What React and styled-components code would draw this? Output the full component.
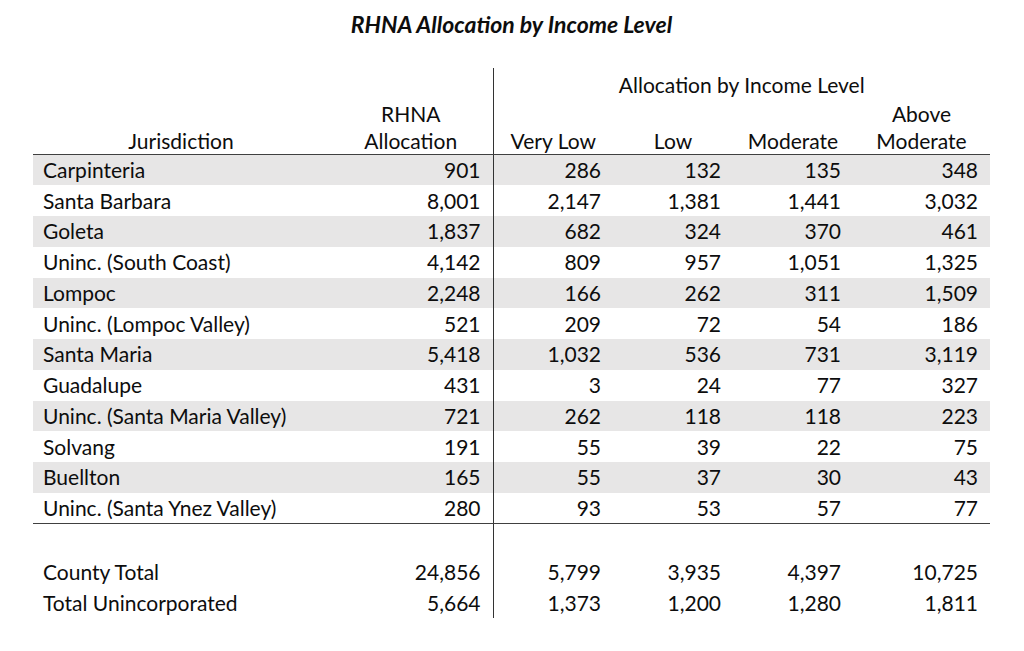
import styled, { createGlobalStyle } from "styled-components";

const rows = [
    ["Carpinteria", "901", "286", "132", "135", "348"],
    ["Santa Barbara", "8,001", "2,147", "1,381", "1,441", "3,032"],
    ["Goleta", "1,837", "682", "324", "370", "461"],
    ["Uninc. (South Coast)", "4,142", "809", "957", "1,051", "1,325"],
    ["Lompoc", "2,248", "166", "262", "311", "1,509"],
    ["Uninc. (Lompoc Valley)", "521", "209", "72", "54", "186"],
    ["Santa Maria", "5,418", "1,032", "536", "731", "3,119"],
    ["Guadalupe", "431", "3", "24", "77", "327"],
    ["Uninc. (Santa Maria Valley)", "721", "262", "118", "118", "223"],
    ["Solvang", "191", "55", "39", "22", "75"],
    ["Buellton", "165", "55", "37", "30", "43"],
    ["Uninc. (Santa Ynez Valley)", "280", "93", "53", "57", "77"],
];

const totals = [
    ["County Total", "24,856", "5,799", "3,935", "4,397", "10,725"],
    ["Total Unincorporated", "5,664", "1,373", "1,200", "1,280", "1,811"],
];

const widths = [296, 164, 120, 120, 120, 137];

const App = () => {
    return (
        <>
            <GlobalStyle />
            <PageStyles>
                <TitleStyles>RHNA Allocation by Income Level</TitleStyles>
                <TableStyles>
                    <colgroup>
                        {widths.map((w, i) => <col key={i} style={{ width: w }} />)}
                    </colgroup>
                    <thead>
                        <tr className="top">
                            <th />
                            <th />
                            <th colSpan={4} className="divider">Allocation by Income Level</th>
                        </tr>
                        <tr className="labels">
                            <th>Jurisdiction</th>
                            <th>RHNA<br />Allocation</th>
                            <th className="divider">Very Low</th>
                            <th>Low</th>
                            <th>Moderate</th>
                            <th>Above<br />Moderate</th>
                        </tr>
                    </thead>
                    <tbody>
                        {rows.map((r, i) => (
                            <RowStyles key={r[0]} $shaded={i % 2 === 0} $last={i === rows.length - 1}>
                                {r.map((c, j) => (
                                    <td key={j} className={j === 2 ? "divider" : ""}>{c}</td>
                                ))}
                            </RowStyles>
                        ))}
                        <RowStyles $height={33}>
                            <td /><td /><td className="divider" /><td /><td /><td />
                        </RowStyles>
                        {totals.map((r) => (
                            <RowStyles key={r[0]}>
                                {r.map((c, j) => (
                                    <td key={j} className={j === 2 ? "divider" : ""}>{c}</td>
                                ))}
                            </RowStyles>
                        ))}
                    </tbody>
                </TableStyles>
            </PageStyles>
        </>
    );
};

const GlobalStyle = createGlobalStyle`
    body{
        margin: 0;
        background: #fff;
    }
`;

const PageStyles = styled.div`
    width: 1024px;
    height: 651px;
    padding: 0 34px 0 33px;
    box-sizing: border-box;
    font-family: Lato, "Open Sans", sans-serif;
    color: #0d0d0d;
`;

const TitleStyles = styled.h1`
    margin: 0;
    height: 48px;
    line-height: 48px;
    text-align: center;
    font-size: 23px;
    font-weight: 700;
    font-style: italic;
    margin-bottom: 20px;
`;

const TableStyles = styled.table`
    width: 957px;
    table-layout: fixed;
    border-collapse: collapse;
    font-size: 21px;

    th{
        font-weight: 400;
        padding: 0;
        text-align: center;
    }

    .divider{
        border-left: 1px solid #333;
    }

    tr.top th{
        height: 30px;
        line-height: 26px;
        padding-top: 2px;
        vertical-align: middle;
    }

    tr.labels th{
        height: 54px;
        line-height: 27px;
        vertical-align: bottom;
        border-bottom: 1px solid #404040;
    }
`;

const RowStyles = styled.tr`
    height: ${(p) => (p.$height || 30.75)}px;
    background: ${(p) => (p.$shaded ? "#e7e6e6" : "transparent")};

    td{
        padding: 0 12px 0 0;
        text-align: right;
        line-height: 24px;
        white-space: nowrap;
        border-bottom: ${(p) => (p.$last ? "1px solid #404040" : "none")};
    }

    td:first-child{
        text-align: left;
        padding-left: 10px;
    }
`;

export default App;
